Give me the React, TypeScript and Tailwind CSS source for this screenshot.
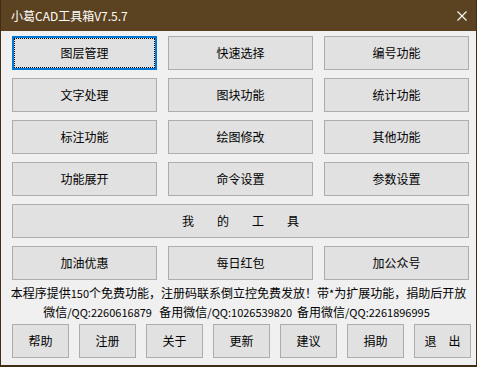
import React from 'react';

const cjk = "font-['Noto_Sans_CJK_SC',sans-serif]";

const grid = [
  ['图层管理', '快速选择', '编号功能'],
  ['文字处理', '图块功能', '统计功能'],
  ['标注功能', '绘图修改', '其他功能'],
  ['功能展开', '命令设置', '参数设置'],
];

const bottom = ['帮助', '注册', '关于', '更新', '建议', '捐助'];

const Btn: React.FC<{ children: React.ReactNode; focused?: boolean; className?: string }> = ({
  children,
  focused,
  className = '',
}) => (
  <div
    className={
      'h-[34px] flex items-center justify-center bg-[#e1e1e1] text-[12px] leading-none text-black ' +
      (focused
        ? 'border-2 border-[#0078d7] outline-1 outline-dotted outline-black outline-offset-[-3px] '
        : 'border border-[#adadad] ') +
      className
    }
  >
    {children}
  </div>
);

// half-width latin, a touch smaller than the cjk text
const M: React.FC<{ children: React.ReactNode }> = ({ children }) => (
  <span className="text-[11px]">{children}</span>
);

export default function App() {
  return (
    <div
      className={`w-[477px] h-[367px] bg-[#f0f0f0] border-x border-b-2 border-[#3f2d14] flex flex-col ${cjk}`}
    >
      <div className="h-[31px] shrink-0 bg-[#5b4220] flex items-center justify-between pl-[10px] pr-[9px]">
        <span className="text-white text-[12px] leading-none">小葛CAD工具箱V7.5.7</span>
        <svg width="10" height="10" viewBox="0 0 10 10" className="text-white">
          <path d="M0.5 0.5 L9.5 9.5 M9.5 0.5 L0.5 9.5" stroke="currentColor" strokeWidth="1.1" />
        </svg>
      </div>

      <div className="pl-[11px] pt-[5px] flex flex-col">
        <div className="w-[457px] grid grid-cols-3 gap-x-[11px] gap-y-[8px]">
          {grid.flat().map((t, i) => (
            <Btn key={t} focused={i === 0}>
              {t}
            </Btn>
          ))}
          <Btn className="col-span-3 gap-[23px]">
            <span>我</span>
            <span>的</span>
            <span>工</span>
            <span>具</span>
          </Btn>
          <Btn>加油优惠</Btn>
          <Btn>每日红包</Btn>
          <Btn>加公众号</Btn>
        </div>
      </div>

      <div className="mt-[3px] text-[12px] text-black text-center">
        <div className="h-[19px] leading-[19px] whitespace-pre">
          本程序提供<M>150</M>个免费功能，注册码联系倒立控免费发放！带<M>*</M>为扩展功能，捐助后开放
        </div>
        <div className="h-[19px] leading-[19px] whitespace-pre pr-[4px]">
          微信<M>/QQ:2260616879   </M>备用微信<M>/QQ:1026539820  </M>备用微信<M>/QQ:2261896995</M>
        </div>
      </div>

      <div className="pl-[11px] mt-[3px]">
        <div className="w-[459px] grid grid-cols-7 gap-x-[10px]">
          {bottom.map((t) => (
            <Btn key={t}>{t}</Btn>
          ))}
          <Btn className="gap-[12px]">
            <span>退</span>
            <span>出</span>
          </Btn>
        </div>
      </div>
    </div>
  );
}
